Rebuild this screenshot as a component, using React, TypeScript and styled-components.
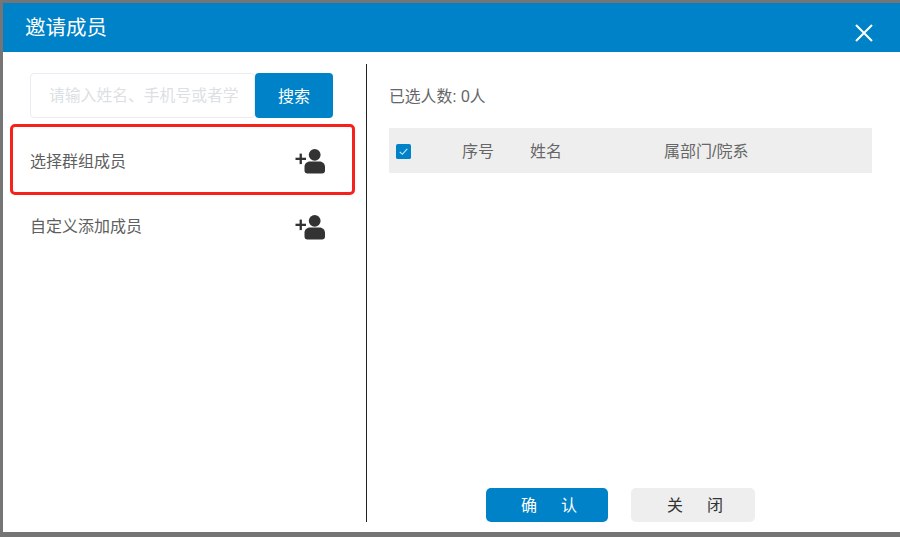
import React from "react";
import styled, { createGlobalStyle } from "styled-components";

const FONT = `"Liberation Sans", "Noto Sans CJK SC", sans-serif`;
const BLUE = "#0082c8";

const Global = createGlobalStyle`
  html, body { margin: 0; padding: 0; background: #757575; }
  body { width: 900px; height: 537px; overflow: hidden; font-family: ${FONT}; }
`;

const Backdrop = styled.div`
  width: 900px;
  height: 537px;
  box-sizing: border-box;
  padding: 3px 0 5px 3px;
`;

const Modal = styled.div`
  height: 100%;
  background: #fff;
  display: flex;
  flex-direction: column;
`;

const Header = styled.header`
  height: 49px;
  flex: none;
  background: ${BLUE};
  display: flex;
  align-items: center;
  justify-content: space-between;
  padding: 0 27px 0 22px;
  color: #fff;
`;

const Title = styled.h1`
  margin: 1px 0 0;
  font-size: 20.5px;
  font-weight: 400;
  line-height: 24px;
`;

const CloseIcon = styled.svg`
  width: 18px;
  height: 18px;
  margin-top: 11px;
  stroke: #fff;
  stroke-width: 2;
  fill: none;
`;

const Body = styled.div`
  flex: 1;
  display: flex;
  padding: 12px 0 10px;
  min-height: 0;
`;

const LeftPanel = styled.aside`
  width: 364px;
  flex: none;
  box-sizing: border-box;
  border-right: 1px solid #222;
  padding: 9px 0 0 7px;
`;

const SearchRow = styled.div`
  display: flex;
  margin-left: 20px;
  width: 303px;
  height: 45px;
`;

const SearchInput = styled.input`
  width: 225px;
  flex: none;
  box-sizing: border-box;
  height: 45px;
  border: 1px solid #eaecf3;
  border-radius: 4px;
  padding: 0 16px 0 18px;
  font: 15.8px ${FONT};
  color: #333;
  outline: none;
  &::placeholder { color: #dcdfe3; opacity: 1; }
`;

const SearchButton = styled.button`
  width: 78px;
  height: 45px;
  border: 0;
  border-radius: 4px;
  background: ${BLUE};
  color: #fff;
  font: 16px ${FONT};
  padding: 0 0 2px;
`;

const MemberRow = styled.div<{ $highlight?: boolean }>`
  width: 345px;
  box-sizing: border-box;
  height: ${(p) => (p.$highlight ? "71px" : "60px")};
  margin-top: ${(p) => (p.$highlight ? "6px" : "0")};
  border: ${(p) => (p.$highlight ? "3px solid #f5211a" : "3px solid transparent")};
  border-radius: 5px;
  display: flex;
  align-items: center;
  justify-content: space-between;
  padding: 0 26px 0 17px;
  font-size: 16px;
  color: #5f5f5f;
`;

const AddIcon = styled.svg`
  width: 31px;
  height: 26px;
  margin-top: 3px;
  fill: #333;
  flex: none;
`;

const RightPanel = styled.main`
  flex: 1;
  min-width: 0;
  display: flex;
  flex-direction: column;
  padding: 0 28px 0 22px;
`;

const Count = styled.div`
  font-size: 15.8px;
  line-height: 24px;
  color: #666;
  margin: 13px 0 0;
  height: 24px;
  padding-top: 8px;
`;

const TableHead = styled.div`
  margin-top: 19px;
  height: 45px;
  box-sizing: border-box;
  padding-bottom: 1px;
  background: #eeeeee;
  display: grid;
  grid-template-columns: 73px 68px 134px 1fr;
  align-items: center;
  font-size: 16px;
  color: #666;
`;

const CheckCell = styled.div`
  padding: 3px 0 0 7px;
  display: flex;
`;

const CheckBox = styled.svg`
  width: 15px;
  height: 15px;
  display: block;
`;

const Footer = styled.footer`
  margin-top: auto;
  display: flex;
  gap: 23px;
  padding-left: 97px;
`;

const FooterButton = styled.button<{ $primary?: boolean }>`
  width: ${(p) => (p.$primary ? "122px" : "124px")};
  height: 34px;
  border: 0;
  border-radius: 5px;
  padding: 0 0 2px 8px;
  background: ${(p) => (p.$primary ? BLUE : "#eeeeee")};
  color: ${(p) => (p.$primary ? "#fff" : "#333")};
  font: 16px ${FONT};
  letter-spacing: 4px;
  white-space: pre;
`;

const AddPerson = () => (
  <AddIcon viewBox="0 0 31 26" aria-hidden="true">
    <rect x="0.500" y="9.700" width="10.500" height="2.300" />
    <rect x="4.600" y="5.600" width="2.300" height="10.500" />
    <circle cx="19.700" cy="6.800" r="5.900" />
    <path d="M15 13.600h9.500c3.200 0 5.500 2.300 5.500 5.200v3.700a3 3 0 0 1-3 3h-14.500a3 3 0 0 1-3-3v-3.700c0-2.900 2.300-5.200 5.500-5.200z" />
  </AddIcon>
);

export default function App() {
  return (
    <>
      <Global />
      <Backdrop>
        <Modal>
          <Header>
            <Title>邀请成员</Title>
            <CloseIcon viewBox="0 0 18 18" aria-hidden="true">
              <path d="M1 1l16 16M17 1L1 17" />
            </CloseIcon>
          </Header>
          <Body>
            <LeftPanel>
              <SearchRow>
                <SearchInput placeholder="请输入姓名、手机号或者学号" />
                <SearchButton>搜索</SearchButton>
              </SearchRow>
              <MemberRow $highlight>
                选择群组成员
                <AddPerson />
              </MemberRow>
              <MemberRow>
                自定义添加成员
                <AddPerson />
              </MemberRow>
            </LeftPanel>
            <RightPanel>
              <Count>已选人数: 0人</Count>
              <TableHead>
                <CheckCell>
                  <CheckBox viewBox="0 0 16 16" aria-hidden="true">
                    <rect width="16" height="16" rx="2" fill={BLUE} />
                    <path d="M4 8.300l2.800 2.700L12 5.300" fill="none" stroke="#cfe8f6" strokeWidth="1.200" />
                  </CheckBox>
                </CheckCell>
                <span>序号</span>
                <span>姓名</span>
                <span>属部门/院系</span>
              </TableHead>
              <Footer>
                <FooterButton $primary>确　认</FooterButton>
                <FooterButton>关　闭</FooterButton>
              </Footer>
            </RightPanel>
          </Body>
        </Modal>
      </Backdrop>
    </>
  );
}
